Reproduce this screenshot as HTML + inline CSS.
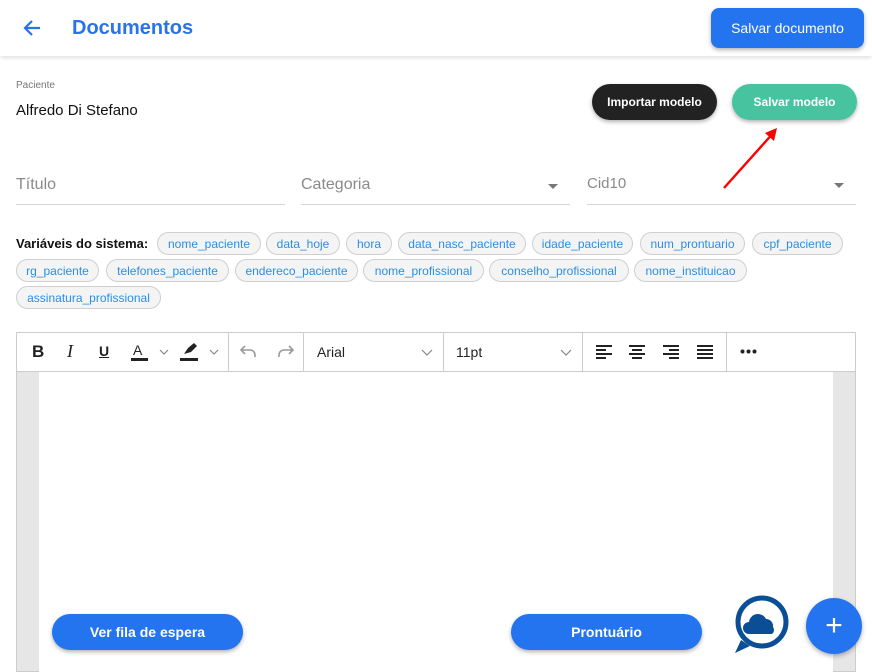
<!DOCTYPE html>
<html><head><meta charset="utf-8"><style>
*{box-sizing:border-box;margin:0;padding:0}
body{width:872px;height:664px;overflow:hidden;background:#fff;font-family:"Liberation Sans",Arial,sans-serif;position:relative;color:#222}
.a{position:absolute}
.hdr{left:0;top:0;width:872px;height:56px;background:#fff;box-shadow:0 2px 4px rgba(0,0,0,.12)}
.btn{position:absolute;border-radius:12px;color:#fff;font-size:14px;font-weight:bold;display:flex;align-items:center;justify-content:center;box-shadow:0 2px 4px rgba(0,0,0,.3)}
.chip{position:absolute;height:23px;border:1px solid #cfcfcf;border-radius:12px;background:#f4f4f4;color:#2a8ee6;font-size:12px;display:flex;align-items:center;justify-content:center;white-space:nowrap}
.fld{position:absolute;border-bottom:1px solid #d5d5d5;color:#8a8a8a;font-size:16px}
.caret{position:absolute;width:0;height:0;border-left:5px solid transparent;border-right:5px solid transparent;border-top:5px solid #777}
.sep{position:absolute;top:333px;width:1px;height:38px;background:#ccc}
.tb{position:absolute;top:341px;font-size:15px;color:#222}
.chev{position:absolute}
</style></head><body>
<div class="a hdr"></div>
<svg class="a" style="left:22px;top:18px" width="20" height="20" viewBox="0 0 20 20"><path d="M18 10H3M10 3L3 10l7 7" stroke="#2a73e8" stroke-width="2.2" fill="none"/></svg>
<div class="a" style="left:72px;top:17px;font-size:20px;font-weight:bold;color:#2a73e8">Documentos</div>
<div class="btn" style="left:711px;top:8px;width:153px;height:40px;background:#2574ef;border-radius:8px;font-weight:normal;font-size:14px">Salvar documento</div>

<div class="a" style="left:16px;top:80px;font-size:10px;color:#777">Paciente</div>
<div class="a" style="left:16px;top:102px;font-size:15px;color:#111">Alfredo Di Stefano</div>
<div class="btn" style="left:592px;top:84px;width:125px;height:36px;background:#222;border-radius:18px;font-size:12px">Importar modelo</div>
<div class="btn" style="left:732px;top:84px;width:125px;height:36px;background:#47c3a0;border-radius:18px;font-size:12px">Salvar modelo</div>
<svg class="a" style="left:720px;top:125px" width="60" height="66"><path d="M4 63L55 6" stroke="red" stroke-width="2.4"/><path d="M45 8L57 3L54 16Z" fill="red"/></svg>

<div class="fld" style="left:16px;top:176px;width:269px;height:29px">Título</div>
<div class="fld" style="left:301px;top:176px;width:269px;height:29px">Categoria</div>
<div class="caret" style="left:548px;top:184px"></div>
<div class="fld" style="left:587px;top:175px;width:269px;height:30px;font-size:15px">Cid10</div>
<div class="caret" style="left:834px;top:183px"></div>

<div class="a" style="left:16px;top:236px;font-size:13px;font-weight:bold;color:#111">Variáveis do sistema:</div>
<div class="chip" style="left:157px;top:232px;width:104px">nome_paciente</div>
<div class="chip" style="left:266px;top:232px;width:74px">data_hoje</div>
<div class="chip" style="left:346px;top:232px;width:46px">hora</div>
<div class="chip" style="left:398px;top:232px;width:128px">data_nasc_paciente</div>
<div class="chip" style="left:532px;top:232px;width:101px">idade_paciente</div>
<div class="chip" style="left:640px;top:232px;width:105px">num_prontuario</div>
<div class="chip" style="left:752px;top:232px;width:91px">cpf_paciente</div>
<div class="chip" style="left:16px;top:259px;width:83px">rg_paciente</div>
<div class="chip" style="left:106px;top:259px;width:123px">telefones_paciente</div>
<div class="chip" style="left:235px;top:259px;width:123px">endereco_paciente</div>
<div class="chip" style="left:363px;top:259px;width:121px">nome_profissional</div>
<div class="chip" style="left:489px;top:259px;width:140px">conselho_profissional</div>
<div class="chip" style="left:634px;top:259px;width:113px">nome_instituicao</div>
<div class="chip" style="left:16px;top:286px;width:145px">assinatura_profissional</div>

<div class="a" style="left:16px;top:332px;width:840px;height:340px;border:1px solid #ccc;background:#fff"></div>
<div class="a" style="left:17px;top:371px;width:838px;height:300px;background:#e6e6e6;border-top:1px solid #ccc"></div>
<div class="a" style="left:39px;top:372px;width:794px;height:300px;background:#fff"></div>
<div class="sep" style="left:228px"></div><div class="sep" style="left:303px"></div><div class="sep" style="left:443px"></div><div class="sep" style="left:582px"></div><div class="sep" style="left:726px"></div>
<div class="tb" style="left:32px;font-weight:bold;font-size:17px;top:342px">B</div>
<div class="tb" style="left:67px;font-style:italic;font-family:'Liberation Serif';font-size:18px;top:341px">I</div>
<div class="tb" style="left:99px;text-decoration:underline;font-weight:bold;font-size:14px;top:343px">U</div>
<div class="tb" style="left:133px;font-size:14px;top:342px">A</div>
<div class="a" style="left:131px;top:358px;width:17px;height:3px;background:#222"></div>
<svg class="chev" style="left:159px;top:349px" width="10" height="6"><path d="M1 1l4 4 4-4" stroke="#888" stroke-width="1.2" fill="none"/></svg>
<svg class="a" style="left:181px;top:342px" width="18" height="14"><path d="M3 12L7 6l6-5 3 3-6 6z" fill="#222"/></svg>
<div class="a" style="left:180px;top:358px;width:18px;height:3px;background:#222"></div>
<svg class="chev" style="left:209px;top:349px" width="10" height="6"><path d="M1 1l4 4 4-4" stroke="#888" stroke-width="1.2" fill="none"/></svg>
<svg class="a" style="left:239px;top:342px" width="60" height="18"><path d="M6 4L2 8l4 4M2 8h9a5 5 0 015 5v2" stroke="#999" stroke-width="1.6" fill="none"/><path d="M50 4l4 4-4 4M54 8h-9a5 5 0 00-5 5v2" stroke="#999" stroke-width="1.6" fill="none"/></svg>
<div class="tb" style="left:317px;font-size:14px;top:344px">Arial</div>
<svg class="chev" style="left:421px;top:349px" width="12" height="7"><path d="M1 1l5 5 5-5" stroke="#888" stroke-width="1.2" fill="none"/></svg>
<div class="tb" style="left:456px;font-size:14px;top:344px">11pt</div>
<svg class="chev" style="left:560px;top:349px" width="12" height="7"><path d="M1 1l5 5 5-5" stroke="#888" stroke-width="1.2" fill="none"/></svg>
<svg class="a" style="left:594px;top:344px" width="125" height="16" fill="#222">
<rect x="2" y="1" width="16" height="2"/><rect x="2" y="5" width="10" height="2"/><rect x="2" y="9" width="16" height="2"/><rect x="2" y="13" width="10" height="2"/>
<rect x="35" y="1" width="16" height="2"/><rect x="38" y="5" width="10" height="2"/><rect x="35" y="9" width="16" height="2"/><rect x="38" y="13" width="10" height="2"/>
<rect x="69" y="1" width="16" height="2"/><rect x="75" y="5" width="10" height="2"/><rect x="69" y="9" width="16" height="2"/><rect x="75" y="13" width="10" height="2"/>
<rect x="103" y="1" width="16" height="2"/><rect x="103" y="5" width="16" height="2"/><rect x="103" y="9" width="16" height="2"/><rect x="103" y="13" width="16" height="2"/></svg>
<svg class="a" style="left:740px;top:349px" width="18" height="5" fill="#222"><circle cx="2.5" cy="2.5" r="2"/><circle cx="8.5" cy="2.5" r="2"/><circle cx="14.5" cy="2.5" r="2"/></svg>

<div class="btn" style="left:52px;top:614px;width:191px;height:36px;background:#2574ef;border-radius:18px">Ver fila de espera</div>
<div class="btn" style="left:511px;top:614px;width:191px;height:36px;background:#2574ef;border-radius:18px">Prontuário</div>
<svg class="a" style="left:732px;top:594px" width="60" height="60"><circle cx="30" cy="28" r="24" fill="#fff" stroke="#0a4f95" stroke-width="5"/><path d="M9 46L3 59l15-7z" fill="#0a4f95"/><path d="M17 40a6 6 0 010-12 9 9 0 0117-3 7 7 0 017 8 5 5 0 01-1 7z" fill="#0a4f95"/></svg>
<div class="a" style="left:806px;top:598px;width:56px;height:56px;border-radius:50%;background:#2574ef;box-shadow:0 2px 5px rgba(0,0,0,.3);color:#fff;font-size:30px;display:flex;align-items:center;justify-content:center">+</div>
</body></html>
